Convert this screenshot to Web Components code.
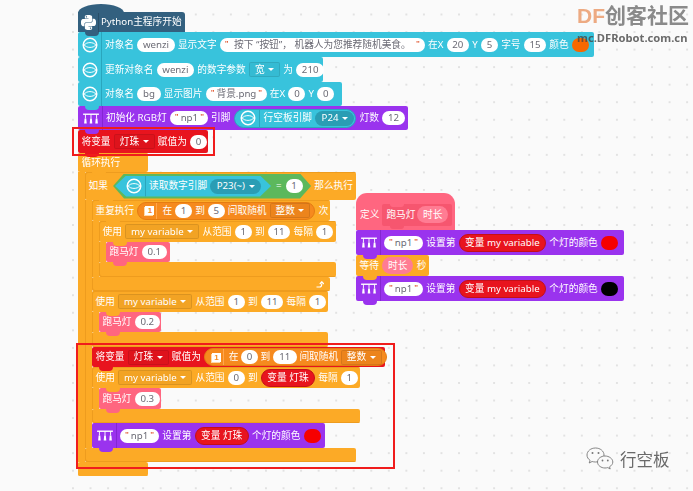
<!DOCTYPE html>
<html lang="zh">
<head>
<meta charset="utf-8">
<title>Mind+ blocks</title>
<style>
  html, body { margin: 0; padding: 0; background: #fafafa; }
</style>
</head>
<body>
<sb-canvas>
  <sb-stack style="left:78px;top:12px">
    <sb-block tone="navy" icon="python" style="width:107px;height:20px">Python主程序开始</sb-block>
    <sb-block tone="cyan" icon="hiker" style="width:516px;height:25px">对象名 <sb-pill>wenzi</sb-pill> 显示文字 <sb-pill quoted style="width:205px">按下 “按钮”， 机器人为您推荐随机美食。</sb-pill> 在X <sb-pill>20</sb-pill> Y <sb-pill>5</sb-pill> 字号 <sb-pill>15</sb-pill> 颜色 <sb-swatch color="#f76800"></sb-swatch></sb-block>
    <sb-block tone="cyan" icon="hiker" style="width:245px;height:25px">更新对象名 <sb-pill>wenzi</sb-pill> 的数字参数 <sb-drop>宽</sb-drop> 为 <sb-pill>210</sb-pill></sb-block>
    <sb-block tone="cyan" icon="hiker" style="width:264px;height:24px">对象名 <sb-pill>bg</sb-pill> 显示图片 <sb-pill quoted style="width:61px">背景.png</sb-pill> 在X <sb-pill>0</sb-pill> Y <sb-pill>0</sb-pill></sb-block>
    <sb-block tone="purple" icon="led" style="width:330px;height:24px">初始化 RGB灯 <sb-pill quoted style="width:38px">np1</sb-pill> 引脚 <sb-round tone="cyan" icon="hiker" style="padding:0 1px 0 5px;height:19px;border-radius:10px">行空板引脚 <sb-drop round>P24</sb-drop></sb-round> 灯数 <sb-pill>12</sb-pill></sb-block>
    <sb-block tone="red" style="width:130px;height:23px">将变量 <sb-drop>灯珠</sb-drop> 赋值为 <sb-pill>0</sb-pill></sb-block>

    <sb-c style="--w:70px;--hh:19px;--fh:14px;--l:#fcaa26">
      <span slot="head">循环执行</span>
      <sb-c style="--w:271px;--hh:28px;--fh:14px">
        <span slot="head">如果</span>
        <sb-hex slot="head" tone="green" style="width:198px;height:25px;margin-left:2px">
          <sb-hex tone="cyan" style="width:156px;height:21px"><sb-glyph name="hiker"></sb-glyph>读取数字引脚 <sb-drop round>P23(~)</sb-drop></sb-hex>
          = <sb-pill>1</sb-pill>
        </sb-hex>
        <span slot="head">那么执行</span>

        <sb-c style="--w:238px;--hh:21px;--fh:14px">
          <span slot="head">重复执行</span>
          <sb-round slot="head" tone="amber" book>在 <sb-pill>1</sb-pill> 到 <sb-pill>5</sb-pill> 间取随机 <sb-drop>整数</sb-drop></sb-round>
          <span slot="head">次</span>
          <sb-c style="--w:237px;--hh:21px;--fh:15px">
            <span slot="head">使用</span>
            <sb-drop slot="head">my variable</sb-drop>
            <span slot="head">从范围</span>
            <sb-pill slot="head">1</sb-pill>
            <span slot="head">到</span>
            <sb-pill slot="head">11</sb-pill>
            <span slot="head">每隔</span>
            <sb-pill slot="head">1</sb-pill>
            <sb-block tone="pink" style="width:64px;height:20px">跑马灯 <sb-pill>0.1</sb-pill></sb-block>
          </sb-c>
          <sb-loop-arrow slot="foot"></sb-loop-arrow>
        </sb-c>

        <sb-c style="--w:236px;--hh:21px;--fh:15px">
          <span slot="head">使用</span>
          <sb-drop slot="head">my variable</sb-drop>
          <span slot="head">从范围</span>
          <sb-pill slot="head">1</sb-pill>
          <span slot="head">到</span>
          <sb-pill slot="head">11</sb-pill>
          <span slot="head">每隔</span>
          <sb-pill slot="head">1</sb-pill>
          <sb-block tone="pink" style="width:62px;height:20px">跑马灯 <sb-pill>0.2</sb-pill></sb-block>
        </sb-c>

        <sb-block tone="red" style="width:293px;height:20px">将变量 <sb-drop>灯珠</sb-drop> 赋值为 <sb-round tone="amber" book style="gap:2.6px">在 <sb-pill>0</sb-pill> 到 <sb-pill style="width:24px">11</sb-pill> 间取随机 <sb-drop>整数</sb-drop></sb-round></sb-block>

        <sb-c style="--w:268px;--hh:21px;--fh:14px">
          <span slot="head">使用</span>
          <sb-drop slot="head">my variable</sb-drop>
          <span slot="head">从范围</span>
          <sb-pill slot="head">0</sb-pill>
          <span slot="head">到</span>
          <sb-round slot="head" tone="red">变量 灯珠</sb-round>
          <span slot="head">每隔</span>
          <sb-pill slot="head">1</sb-pill>
          <sb-block tone="pink" style="width:62px;height:21px">跑马灯 <sb-pill>0.3</sb-pill></sb-block>
        </sb-c>

        <sb-block tone="purple" icon="led" style="width:233px;height:25px"><sb-pill quoted>np1</sb-pill> 设置第 <sb-round tone="red">变量 灯珠</sb-round> 个灯的颜色 <sb-swatch color="#f60000"></sb-swatch></sb-block>
      </sb-c>
    </sb-c>
  </sb-stack>

  <sb-stack style="left:356px;top:193px">
    <sb-define>定义 <sb-call>跑马灯 <sb-arg>时长</sb-arg></sb-call></sb-define>
    <sb-block tone="purple" icon="led" style="width:268px;height:25px"><sb-pill quoted>np1</sb-pill> 设置第 <sb-round tone="red">变量 my variable</sb-round> 个灯的颜色 <sb-swatch color="#f60000"></sb-swatch></sb-block>
    <sb-block tone="orange" style="width:73px;height:21px">等待 <sb-arg>时长</sb-arg> 秒</sb-block>
    <sb-block tone="purple" icon="led" style="width:268px;height:25px"><sb-pill quoted>np1</sb-pill> 设置第 <sb-round tone="red">变量 my variable</sb-round> 个灯的颜色 <sb-swatch color="#000000"></sb-swatch></sb-block>
  </sb-stack>

  <sb-mark style="left:72px;top:127px;width:143px;height:29px"></sb-mark>
  <sb-mark style="left:76px;top:343px;width:319px;height:126px"></sb-mark>
  <sb-watermark></sb-watermark>
  <sb-wechat>行空板</sb-wechat>
</sb-canvas>

<script>
const GLYPHS = {
  hiker: `<svg width="16" height="16" viewBox="0 0 18 18" fill="none" stroke="#fff">
      <circle cx="9" cy="9" r="7.6" stroke-width="1.7"/>
      <path d="M2.5 9C5 5.4 13 5.4 15.5 9C13 12.6 5 12.6 2.5 9Z" stroke-width="1.1"/>
    </svg>`,
  led: `<svg width="18" height="13" viewBox="0 0 19 14" fill="#fff" stroke="#fff">
      <path d="M1 2.4H18" stroke-width="1.5" fill="none"/>
      <path d="M3.5 2.4V7M9.5 2.4V7M15.5 2.4V7" stroke-width="1" fill="none"/>
      <path d="M2.6 7h1.8l.5 5.5H2.1zM8.6 7h1.8l.5 5.5H8.1zM14.6 7h1.8l.5 5.5h-2.8z" stroke="none"/>
    </svg>`,
  python: `<svg width="15" height="15" viewBox="0 0 24 24" fill="#fff"><path d="M14.25.18l.9.2.73.26.59.3.45.32.34.34.25.34.16.33.1.3.04.26.02.2-.01.13V8.5l-.05.63-.13.55-.21.46-.26.38-.3.31-.33.25-.35.19-.35.14-.33.1-.3.07-.26.04-.21.02H8.77l-.69.05-.59.14-.5.22-.41.27-.33.32-.27.35-.2.36-.15.37-.1.35-.07.32-.04.27-.02.21v3.06H3.17l-.21-.03-.28-.07-.32-.12-.35-.18-.36-.26-.36-.36-.35-.46-.32-.59-.28-.73-.21-.88-.14-1.05-.05-1.23.06-1.22.16-1.04.24-.87.32-.71.36-.57.4-.44.42-.33.42-.24.4-.16.36-.1.32-.05.24-.01h.16l.06.01h8.16v-.83H6.18l-.01-2.75-.02-.37.05-.34.11-.31.17-.28.25-.26.31-.23.38-.2.44-.18.51-.15.58-.12.64-.1.71-.06.77-.04.84-.02 1.27.05zm-6.3 1.98l-.23.33-.08.41.08.41.23.34.33.22.41.09.41-.09.33-.22.23-.34.08-.41-.08-.41-.23-.33-.33-.22-.41-.09-.41.09zm13.09 3.95l.28.06.32.12.35.18.36.27.36.35.35.47.32.59.28.73.21.88.14 1.04.05 1.23-.06 1.23-.16 1.04-.24.86-.32.71-.36.57-.4.45-.42.33-.42.24-.4.16-.36.09-.32.05-.24.02-.16-.01h-8.22v.82h5.84l.01 2.76.02.36-.05.34-.11.31-.17.29-.25.25-.31.24-.38.2-.44.17-.51.15-.58.13-.64.09-.71.07-.77.04-.84.01-1.27-.04-1.07-.14-.9-.2-.73-.25-.59-.3-.45-.33-.34-.34-.25-.34-.16-.33-.1-.3-.04-.25-.02-.2.01-.13v-5.34l.05-.64.13-.54.21-.46.26-.38.3-.32.33-.24.35-.2.35-.14.33-.1.3-.06.26-.04.21-.02.13-.01h5.84l.69-.05.59-.14.5-.21.41-.28.33-.32.27-.35.2-.36.15-.36.1-.35.07-.32.04-.28.02-.21V6.07h2.09l.14.01zm-6.47 14.25l-.23.33-.08.41.08.41.23.33.33.23.41.08.41-.08.33-.23.23-.33.08-.41-.08-.41-.23-.33-.33-.23-.41-.08-.41.08z"/></svg>`
};

// colours shared by the block shapes
const TONES = `
  :host([tone=navy])   { --c:#33607f; --e:#294e68; }
  :host([tone=cyan])   { --c:#38c3dc; --e:#2aa6bd; }
  :host([tone=purple]) { --c:#9a33ee; --e:#8426d2; }
  :host([tone=red])    { --c:#e8141e; --e:#c40f17; }
  :host([tone=orange]) { --c:#fcaa26; --e:#e4951b; }
  :host([tone=amber])  { --c:#f68a1e; --e:#e57c12; }
  :host([tone=pink])   { --c:#ff6680; --e:#f04d68; }
  :host([tone=green])  { --c:#5cb85c; --e:#4ca34c; }
`;

class ShadowEl extends HTMLElement {
  constructor() {
    super();
    this.shadowDOM = this.attachShadow({mode: "open"});
  }
  connectedCallback() {
    this.render();
  }
}

class SbCanvas extends ShadowEl {
  render() {
    this.shadowDOM.innerHTML = `
      <style>
        :host {
          display: block;
          position: relative;
          width: 693px;
          height: 491px;
          overflow: hidden;
          color: #fff;
          font: 9.7px/1 "Noto Sans", "Noto Sans CJK SC", sans-serif;
          white-space: nowrap;
        }
        .dots {
          position: absolute;
          left: 72px;
          top: 0;
          right: 0;
          bottom: 0;
          background-image: radial-gradient(circle at 1px 1px, #e2e2e2 0.8px, transparent 1.1px);
          background-size: 17.55px 17.55px;
          background-position: 0 13.5px;
        }
      </style>
      <div class="dots"></div>
      <slot></slot>`;
  }
}

class SbStack extends ShadowEl {
  render() {
    this.shadowDOM.innerHTML = `
      <style>
        :host { display: flex; flex-direction: column; align-items: flex-start; position: absolute; filter: blur(0.3px); }
      </style>
      <slot></slot>`;
  }
}

class SbBlock extends ShadowEl {
  render() {
    const icon = this.getAttribute("icon");
    this.shadowDOM.innerHTML = `
      <style>
        ${TONES}
        :host {
          display: flex;
          align-items: center;
          gap: 3.2px;
          box-sizing: border-box;
          position: relative;
          padding-left: 3.5px;
          background: var(--c);
          border-radius: 2px;
          flex: none;
        }
        :host::after {
          content: "";
          position: absolute;
          left: 7px;
          bottom: -4px;
          width: 14px;
          height: 4px;
          background: var(--c);
          border-radius: 0 0 5px 5px;
          z-index: 1;
        }
        :host([tone=navy]) { border-radius: 0 3px 0 0; padding-left: 3px; }
        :host([tone=navy])::before {
          content: "";
          position: absolute;
          left: 0;
          top: -8px;
          width: 46px;
          height: 9px;
          background: var(--c);
          border-radius: 50% 50% 0 0 / 100% 100% 0 0;
        }
        .icon { display: flex; align-items: center; align-self: stretch; padding-right: 3px; margin-right: 0.3px; border-right: 1px solid var(--e); }
        :host([icon=led]) .icon { padding-right: 2px; }
        :host([icon=python]) .icon { padding-right: 1.5px; margin-right: -0.7px; }
      </style>
      ${icon ? `<span class="icon">${GLYPHS[icon]}</span>` : ""}
      <slot></slot>`;
  }
}

class SbC extends ShadowEl {
  render() {
    this.shadowDOM.innerHTML = `
      <style>
        :host { display: block; flex: none; --o:#fcaa26; --l:#ee9c1e; }
        .head, .foot {
          box-sizing: border-box;
          width: var(--w);
          background: var(--o);
          border-radius: 2px;
          position: relative;
        }
        .head {
          display: flex;
          align-items: center;
          gap: 3.2px;
          height: var(--hh);
          padding-left: 3.5px;
          box-shadow: inset 1px 1px 0 var(--l);
        }
        .head::after {
          content: "";
          position: absolute;
          left: 14px;
          bottom: -4px;
          width: 14px;
          height: 4px;
          background: var(--o);
          border-radius: 0 0 5px 5px;
          z-index: 1;
        }
        .mid { display: flex; }
        .bar { width: 7px; flex: none; background: var(--o); box-shadow: inset 1px 0 0 var(--l); }
        .body { display: flex; flex-direction: column; align-items: flex-start; }
        .foot {
          display: flex;
          align-items: center;
          justify-content: flex-end;
          height: var(--fh);
          padding-right: 4px;
          box-shadow: inset 1px -1px 0 var(--l);
        }
      </style>
      <div class="head"><slot name="head"></slot></div>
      <div class="mid"><div class="bar"></div><div class="body"><slot></slot></div></div>
      <div class="foot"><slot name="foot"></slot></div>`;
  }
}

class SbPill extends ShadowEl {
  render() {
    const quoted = this.hasAttribute("quoted");
    this.shadowDOM.innerHTML = `
      <style>
        :host {
          display: inline-flex;
          align-items: center;
          justify-content: center;
          flex: none;
          gap: 2px;
          height: 14px;
          min-width: 17px;
          box-sizing: border-box;
          padding: 0 5.7px;
          background: #fff;
          border-radius: 7px;
          color: #6b6b75;
        }
        :host([quoted]) { padding: 0 5px; justify-content: space-between; }
        b { align-self: flex-start; color: #e2603c; font: 700 8px/11px "Liberation Sans", sans-serif; }
      </style>
      ${quoted ? "<b>\"</b>" : ""}<slot></slot>${quoted ? "<b>\"</b>" : ""}`;
  }
}

class SbDrop extends ShadowEl {
  render() {
    this.shadowDOM.innerHTML = `
      <style>
        :host {
          display: inline-flex;
          align-items: center;
          flex: none;
          gap: 3.5px;
          height: 15px;
          box-sizing: border-box;
          padding: 0 5px;
          border-radius: 2px;
          border: 1px solid rgba(0, 0, 0, 0.1);
          background: rgba(0, 0, 0, 0.04);
          color: #fff;
        }
        :host([round]) { border: 0; border-radius: 8px; height: 15px; padding: 0 6.5px; background: #2a9db4; }
        i { width: 0; height: 0; border: 3px solid transparent; border-top: 3px solid #fff; border-bottom: 0; }
      </style>
      <slot></slot><i></i>`;
  }
}

class SbRound extends ShadowEl {
  render() {
    const icon = this.getAttribute("icon");
    const book = this.hasAttribute("book");
    this.shadowDOM.innerHTML = `
      <style>
        ${TONES}
        :host {
          display: inline-flex;
          align-items: center;
          flex: none;
          gap: 3px;
          height: 18px;
          box-sizing: border-box;
          padding: 0 5.5px;
          background: var(--c);
          border: 1px solid var(--e);
          border-radius: 9px;
          color: #fff;
        }
        :host([book]) { padding: 0 4px; }
        .icon { display: flex; align-items: center; align-self: stretch; padding: 0 3px 0 0; margin-right: 1px; border-right: 1px solid var(--e); }
        .book {
          display: flex;
          align-self: stretch;
          align-items: center;
          padding: 0 2px 0 3px;
          margin-right: 2px;
          border-right: 1px solid #ffa64d;
        }
        .book span {
          display: block;
          width: 9px;
          height: 9px;
          background: #fff;
          box-shadow: -1px 1px 0 #ffd9a8;
          color: var(--c);
          font: 700 8px/9px "Liberation Sans", sans-serif;
          text-align: center;
        }
      </style>
      ${icon ? `<span class="icon">${GLYPHS[icon]}</span>` : ""}
      ${book ? `<span class="book"><span>1</span></span>` : ""}
      <slot></slot>`;
  }
}

class SbHex extends ShadowEl {
  render() {
    this.shadowDOM.innerHTML = `
      <style>
        ${TONES}
        :host {
          display: inline-flex;
          align-items: center;
          flex: none;
          gap: 4px;
          box-sizing: border-box;
          padding: 0 11px 0 2px;
          background: var(--c);
          clip-path: polygon(11px 0, calc(100% - 11px) 0, 100% 50%, calc(100% - 11px) 100%, 11px 100%, 0 50%);
        }
        :host([tone=cyan]) { padding: 0 10px 0 11px; gap: 3px; margin-right: 1px; }
      </style>
      <slot></slot>`;
  }
}

class SbGlyph extends ShadowEl {
  render() {
    this.shadowDOM.innerHTML = `
      <style>
        :host { display: flex; align-items: center; align-self: stretch; padding-right: 3px; border-right: 1px solid #2aa6bd; flex: none; }
      </style>
      ${GLYPHS[this.getAttribute("name")]}`;
  }
}

class SbSwatch extends ShadowEl {
  render() {
    this.shadowDOM.innerHTML = `
      <style>
        :host { display: block; flex: none; width: 17px; height: 14px; border-radius: 7px; background: ${this.getAttribute("color")}; }
      </style>`;
  }
}

class SbLoopArrow extends ShadowEl {
  render() {
    this.shadowDOM.innerHTML = `
      <style>:host { display: flex; margin-right: 2px; }</style>
      <svg width="8" height="7" viewBox="0 0 8 7" fill="none" stroke="#fff" stroke-width="1.2">
        <path d="M0.5 6H3.5C5 6 5.8 5 5.8 2.4"/>
        <path d="M3.8 3L5.8 0.8L7.8 3" />
      </svg>`;
  }
}

class SbDefine extends ShadowEl {
  render() {
    this.shadowDOM.innerHTML = `
      <style>
        :host {
          display: flex;
          align-items: center;
          gap: 3px;
          box-sizing: border-box;
          width: 99px;
          height: 37px;
          padding: 6px 0 0 4px;
          background: #ff6680;
          border-radius: 11px 11px 0 0;
        }
      </style>
      <slot></slot>`;
  }
}

class SbCall extends ShadowEl {
  render() {
    this.shadowDOM.innerHTML = `
      <style>
        :host {
          display: flex;
          align-items: center;
          justify-content: space-between;
          box-sizing: border-box;
          position: relative;
          width: 70px;
          height: 22px;
          padding: 0 4px 0 4px;
          background: #f6566f;
          border-radius: 2px;
        }
        :host::before, :host::after {
          content: "";
          position: absolute;
          left: 8px;
          width: 14px;
          height: 3px;
          border-radius: 0 0 5px 5px;
        }
        :host::before { top: 0; background: #ff6680; }
        :host::after { bottom: -3px; background: #f6566f; }
      </style>
      <slot></slot>`;
  }
}

class SbArg extends ShadowEl {
  render() {
    this.shadowDOM.innerHTML = `
      <style>
        :host {
          display: inline-flex;
          align-items: center;
          flex: none;
          height: 17px;
          box-sizing: border-box;
          padding: 0 6px;
          background: #ff7c93;
          border-radius: 9px;
        }
      </style>
      <slot></slot>`;
  }
}

class SbMark extends ShadowEl {
  render() {
    this.shadowDOM.innerHTML = `
      <style>
        :host { display: block; position: absolute; box-sizing: border-box; border: 2px solid #f01c1c; z-index: 5; }
      </style>`;
  }
}

class SbWatermark extends ShadowEl {
  render() {
    this.shadowDOM.innerHTML = `
      <style>
        :host {
          display: flex;
          flex-direction: column;
          gap: 2.5px;
          position: absolute;
          right: 5px;
          top: 3px;
          width: 111px;
          z-index: 6;
          font-family: "Noto Sans", "Noto Sans CJK SC", sans-serif;
          font-weight: 700;
        }
        .top { font-size: 21px; line-height: 24px; color: #8a8a8a; white-space: nowrap; }
        .top b { color: #edaa82; font-family: "Liberation Sans", sans-serif; }
        .url { font-size: 11.2px; line-height: 13px; color: rgba(70, 70, 70, 0.8); white-space: nowrap; }
      </style>
      <div class="top"><b>DF</b>创客社区</div>
      <div class="url">mc.DFRobot.com.cn</div>`;
  }
}

class SbWechat extends ShadowEl {
  render() {
    this.shadowDOM.innerHTML = `
      <style>
        :host {
          display: flex;
          align-items: center;
          gap: 6px;
          position: absolute;
          left: 586px;
          top: 447px;
          z-index: 6;
          color: #6a6a6a;
          font: 16.5px/24px "Noto Sans CJK SC", sans-serif;
        }
      </style>
      <svg width="28" height="24" viewBox="0 0 28 24" fill="#fafafa" stroke="#777" stroke-width="0.9">
        <path d="M9.5 1C4.8 1 1 4.1 1 8C1 10.2 2.2 12.1 4.1 13.4L3.2 16L6.1 14.5C7.2 14.8 8.3 15 9.5 15C14.2 15 18 11.9 18 8C18 4.1 14.2 1 9.5 1Z"/>
        <path d="M19 9C15 9 11.5 11.6 11.5 15C11.5 18.4 15 21 19 21C20 21 20.9 20.8 21.8 20.6L24.2 22L23.5 19.8C25.6 18.6 26.8 16.9 26.8 15C26.8 11.6 23 9 19 9Z"/>
        <g fill="#777" stroke="none">
          <circle cx="6.5" cy="6" r="1"/><circle cx="12.5" cy="6" r="1"/>
          <circle cx="16.5" cy="13.5" r="0.9"/><circle cx="21.8" cy="13.5" r="0.9"/>
        </g>
      </svg>
      <slot></slot>`;
  }
}

customElements.define("sb-canvas", SbCanvas);
customElements.define("sb-stack", SbStack);
customElements.define("sb-block", SbBlock);
customElements.define("sb-c", SbC);
customElements.define("sb-pill", SbPill);
customElements.define("sb-drop", SbDrop);
customElements.define("sb-round", SbRound);
customElements.define("sb-hex", SbHex);
customElements.define("sb-glyph", SbGlyph);
customElements.define("sb-swatch", SbSwatch);
customElements.define("sb-loop-arrow", SbLoopArrow);
customElements.define("sb-define", SbDefine);
customElements.define("sb-call", SbCall);
customElements.define("sb-arg", SbArg);
customElements.define("sb-mark", SbMark);
customElements.define("sb-watermark", SbWatermark);
customElements.define("sb-wechat", SbWechat);
</script>
</body>
</html>
